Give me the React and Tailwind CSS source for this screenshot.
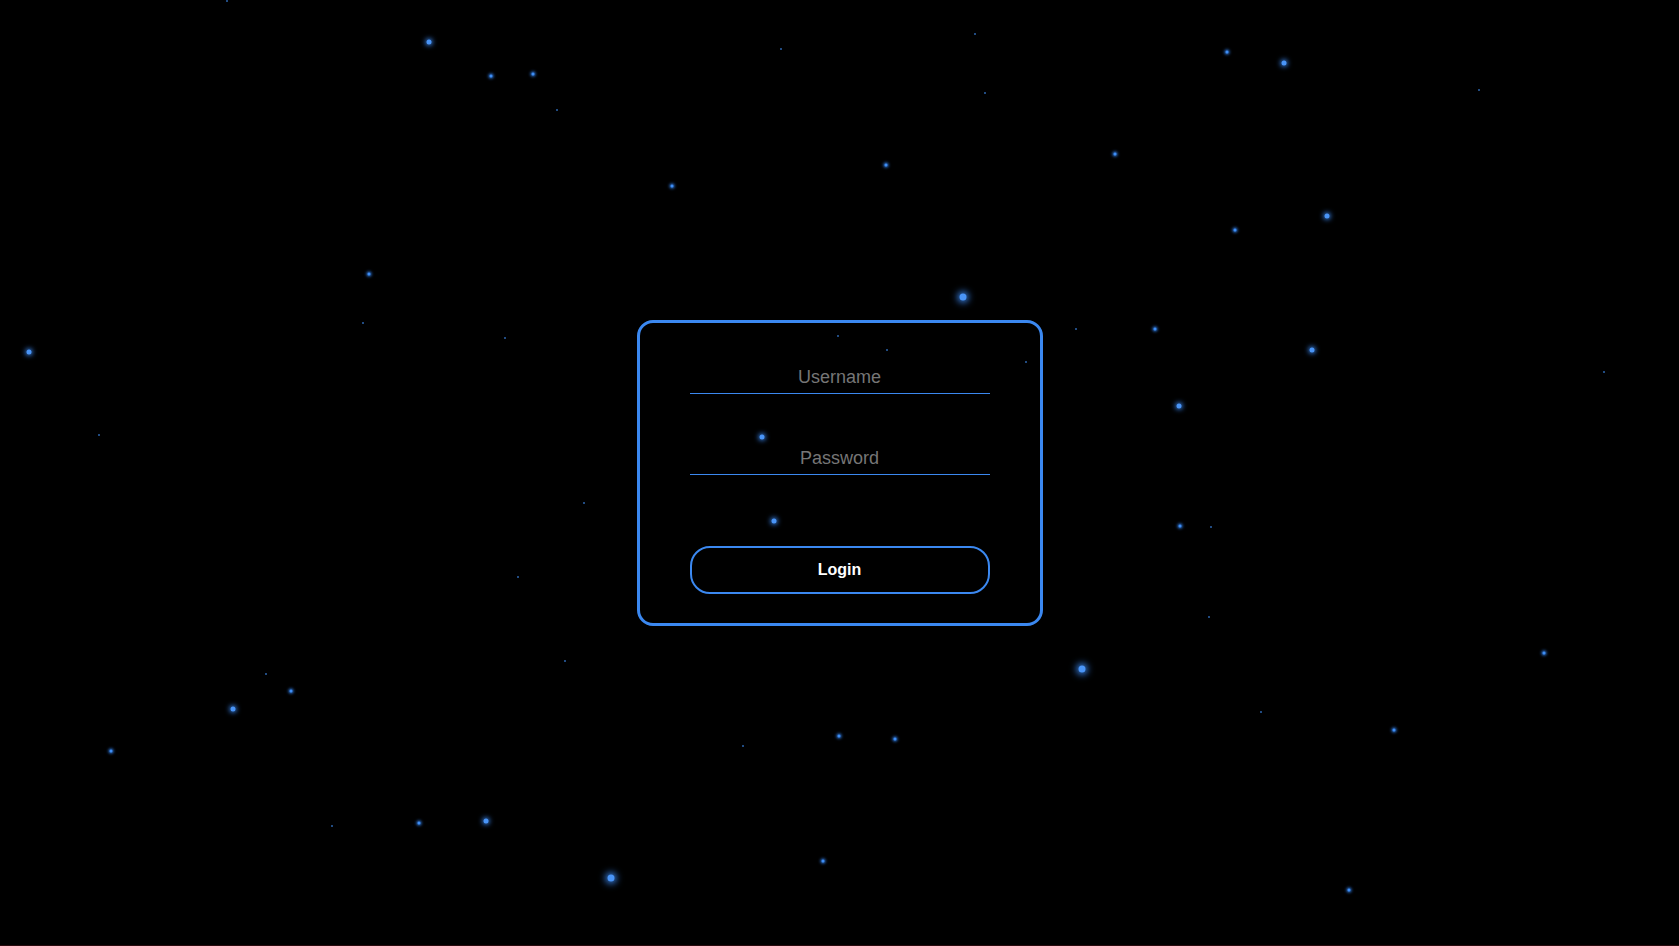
import { useState } from 'react';

const stars = [
  [429, 42, 'm'], [491, 76, 's'], [533, 74, 's'], [557, 110, 't'], [781, 49, 't'],
  [975, 34, 't'], [985, 93, 't'], [886, 165, 's'], [672, 186, 's'], [1115, 154, 's'],
  [1227, 52, 's'], [1284, 63, 'm'], [1479, 90, 't'], [1235, 230, 's'], [1327, 216, 'm'],
  [369, 274, 's'], [363, 323, 't'], [505, 338, 't'], [29, 352, 'm'], [963, 297, 'l'],
  [1155, 329, 's'], [1076, 329, 't'], [1312, 350, 'm'], [1604, 372, 't'], [1179, 406, 'm'],
  [99, 435, 't'], [762, 437, 'm'], [774, 521, 'm'], [584, 503, 't'], [1180, 526, 's'],
  [1211, 527, 't'], [518, 577, 't'], [1209, 617, 't'], [1544, 653, 's'], [1082, 669, 'l'],
  [565, 661, 't'], [266, 674, 't'], [291, 691, 's'], [233, 709, 'm'], [1394, 730, 's'],
  [839, 736, 's'], [895, 739, 's'], [743, 746, 't'], [111, 751, 's'], [1261, 712, 't'],
  [419, 823, 's'], [486, 821, 'm'], [332, 826, 't'], [823, 861, 's'], [611, 878, 'l'],
  [1349, 890, 's'], [227, 1, 't'], [1026, 362, 't'], [838, 336, 't'], [887, 350, 't'],
  [1008, 322, 't'],
];

const sizeClass = {
  t: 'w-[2px] h-[2px] bg-[#3f8ef5] opacity-70',
  s: 'w-[3px] h-[3px] bg-[#3f8ef5] shadow-[0_0_3px_1px_#2f78dd]',
  m: 'w-[5px] h-[5px] bg-[#4a95f7] shadow-[0_0_5px_1px_#3a86ee]',
  l: 'w-[7px] h-[7px] bg-[#4a95f7] shadow-[0_0_7px_2px_#3a86ee]',
};

function Star({ x, y, size }) {
  return (
    <span
      className={`absolute rounded-full -translate-x-1/2 -translate-y-1/2 ${sizeClass[size]}`}
      style={{ left: x, top: y }}
    />
  );
}

export default function App() {
  const [username, setUsername] = useState('');
  const [password, setPassword] = useState('');

  return (
    <div className="relative min-h-screen bg-black overflow-hidden flex items-center justify-center font-['Liberation_Sans',Arial,sans-serif] border-b border-[#2a0a0e]">
      {/* starfield */}
      <div className="absolute inset-0 pointer-events-none">
        {stars.map(([x, y, s], i) => (
          <Star key={i} x={x} y={y} size={s} />
        ))}
      </div>

      {/* login card */}
      <form
        onSubmit={(e) => e.preventDefault()}
        className="relative w-[406px] border-[3px] border-[#3b88f0] rounded-[16px] px-[49px] pt-[40px] pb-[29px] flex flex-col items-center"
      >
        <input
          type="text"
          placeholder="Username"
          value={username}
          onChange={(e) => setUsername(e.target.value)}
          className="w-[300px] h-[31px] pb-[1px] bg-transparent text-center text-[18px] text-white outline-none border-b border-[#3b88f0] placeholder:text-[#767676]"
        />
        <input
          type="password"
          placeholder="Password"
          value={password}
          onChange={(e) => setPassword(e.target.value)}
          className="mt-[50px] w-[300px] h-[31px] pb-[1px] bg-transparent text-center text-[18px] text-white outline-none border-b border-[#3b88f0] placeholder:text-[#767676]"
        />
        <button
          type="submit"
          className="mt-[71px] w-[300px] h-[48px] border-2 border-[#3b88f0] rounded-[20px] bg-transparent text-white font-bold text-[16px]"
        >
          Login
        </button>
      </form>
    </div>
  );
}
